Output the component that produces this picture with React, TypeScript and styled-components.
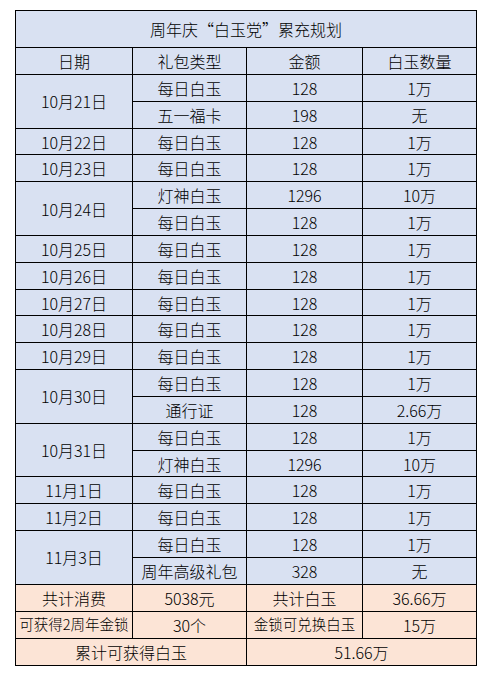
import React from "react"
import styled, { createGlobalStyle } from "styled-components"

const GlobalStyle = createGlobalStyle`
  html, body {
    margin: 0;
    background: #ffffff;
  }
  body {
    font-family: "Noto Sans CJK SC", "Liberation Sans", sans-serif;
    color: #000;
  }
`

type Gift = { name: string; price: string; jade: string }
type Day = { date: string; gifts: Gift[] }

const daily: Gift = { name: "每日白玉", price: "128", jade: "1万" }
const lamp: Gift = { name: "灯神白玉", price: "1296", jade: "10万" }

const days: Day[] = [
  { date: "10月21日", gifts: [daily, { name: "五一福卡", price: "198", jade: "无" }] },
  { date: "10月22日", gifts: [daily] },
  { date: "10月23日", gifts: [daily] },
  { date: "10月24日", gifts: [lamp, daily] },
  { date: "10月25日", gifts: [daily] },
  { date: "10月26日", gifts: [daily] },
  { date: "10月27日", gifts: [daily] },
  { date: "10月28日", gifts: [daily] },
  { date: "10月29日", gifts: [daily] },
  { date: "10月30日", gifts: [daily, { name: "通行证", price: "128", jade: "2.66万" }] },
  { date: "10月31日", gifts: [daily, lamp] },
  { date: "11月1日", gifts: [daily] },
  { date: "11月2日", gifts: [daily] },
  { date: "11月3日", gifts: [daily, { name: "周年高级礼包", price: "328", jade: "无" }] },
]

const Page = styled.div`
  padding: 10px 15px;
`

const Sheet = styled.table`
  border-collapse: collapse;
  table-layout: fixed;
  width: 462px;
  font-size: 16px;
  font-weight: 300;
  line-height: 1;
`

const Row = styled.tr<{ $h: number }>`
  height: ${p => p.$h}px;
`

const Cell = styled.td<{ $tone?: "blue" | "peach"; $small?: boolean }>`
  border: 1px solid #000;
  padding: 0;
  text-align: center;
  vertical-align: middle;
  white-space: nowrap;
  overflow: hidden;
  background: ${p => (p.$tone === "peach" ? "#fce4d6" : "#d9e1f2")};
  font-size: ${p => (p.$small ? "14.5px" : "16px")};
`

const App = () => (
  <Page>
    <GlobalStyle />
    <Sheet>
      <colgroup>
        <col style={{ width: 117 }} />
        <col style={{ width: 114 }} />
        <col style={{ width: 116 }} />
        <col style={{ width: 114 }} />
      </colgroup>
      <tbody>
        <Row $h={37}>
          <Cell colSpan={4}>周年庆“白玉党”累充规划</Cell>
        </Row>
        <Row $h={27}>
          <Cell>日期</Cell>
          <Cell>礼包类型</Cell>
          <Cell>金额</Cell>
          <Cell>白玉数量</Cell>
        </Row>
        {days.map(day =>
          day.gifts.map((g, i) => (
            <Row $h={26.84} key={day.date + i}>
              {i === 0 && <Cell rowSpan={day.gifts.length}>{day.date}</Cell>}
              <Cell>{g.name}</Cell>
              <Cell>{g.price}</Cell>
              <Cell>{g.jade}</Cell>
            </Row>
          ))
        )}
        <Row $h={27}>
          <Cell $tone="peach">共计消费</Cell>
          <Cell $tone="peach">5038元</Cell>
          <Cell $tone="peach">共计白玉</Cell>
          <Cell $tone="peach">36.66万</Cell>
        </Row>
        <Row $h={27}>
          <Cell $tone="peach" $small>可获得2周年金锁</Cell>
          <Cell $tone="peach">30个</Cell>
          <Cell $tone="peach" $small>金锁可兑换白玉</Cell>
          <Cell $tone="peach">15万</Cell>
        </Row>
        <Row $h={27}>
          <Cell $tone="peach" colSpan={2}>累计可获得白玉</Cell>
          <Cell $tone="peach" colSpan={2}>51.66万</Cell>
        </Row>
      </tbody>
    </Sheet>
  </Page>
)

export default App
